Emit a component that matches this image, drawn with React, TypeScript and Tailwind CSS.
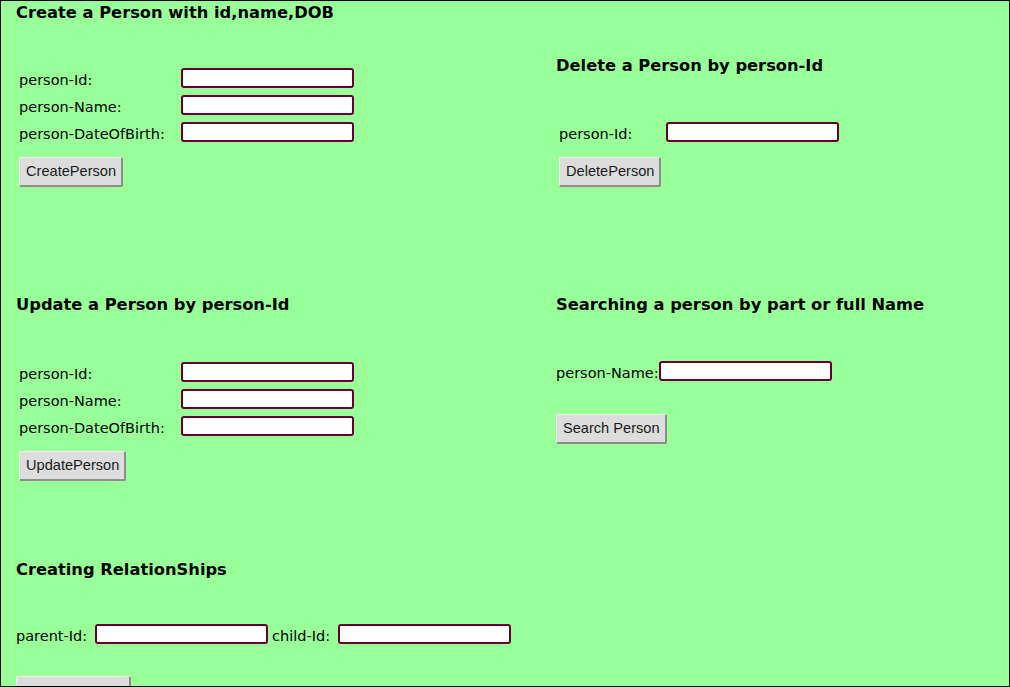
import React from "react";

const labelFont = "font-['Comic_Sans_MS','DejaVu_Sans',sans-serif] text-[14.5px] text-black pt-[6px]";
const headFont = "font-['Comic_Sans_MS','DejaVu_Sans',sans-serif] font-bold text-[16.3px] text-black leading-[22px] h-[23px] pt-[1px]";

function Input() {
  return (
    <input
      type="text"
      className="block w-[173px] h-[20px] border-2 border-[#660033] rounded-[3px] bg-white outline-none shrink-0"
    />
  );
}

const btnCls =
  "h-[30px] pl-[6px] pr-[5px] bg-[#dddddd] text-[14.6px] font-['Liberation_Sans',Arial,sans-serif] text-[#1a1a1a] border-t border-l border-t-[#ececec] border-l-[#ececec] border-r-2 border-b-2 border-r-[#8c8c8c] border-b-[#8c8c8c] rounded-[2px] leading-none";

function Btn({ children }: { children: React.ReactNode }) {
  return <button className={btnCls}>{children}</button>;
}

function Row({ label, labelW }: { label: string; labelW: string }) {
  return (
    <div className="flex items-center h-[20px]">
      <span className={`${labelFont} ${labelW} shrink-0 whitespace-nowrap`}>{label}</span>
      <Input />
    </div>
  );
}

export default function App() {
  return (
    <div className="w-[1010px] h-[687px] border border-black bg-[#99ff99] overflow-hidden">
      {/* Row 1 */}
      <div className="grid grid-cols-[540px_1fr] h-[292px]">
        <div className="flex flex-col">
          <h3 className={`${headFont} pl-[15px]`}>Create a Person with id,name,DOB</h3>
          <div className="mt-[44px] pl-[18px] flex flex-col gap-[7px]">
            <Row label="person-Id:" labelW="w-[162px]" />
            <Row label="person-Name:" labelW="w-[162px]" />
            <Row label="person-DateOfBirth:" labelW="w-[162px]" />
          </div>
          <div className="mt-[15px] pl-[18px]">
            <Btn>CreatePerson</Btn>
          </div>
        </div>
        <div className="flex flex-col">
          <h3 className={`${headFont} pl-[15px] mt-[53px]`}>Delete a Person by person-Id</h3>
          <div className="mt-[45px] pl-[18px] flex flex-col">
            <Row label="person-Id:" labelW="w-[107px]" />
          </div>
          <div className="mt-[15px] pl-[18px]">
            <Btn>DeletePerson</Btn>
          </div>
        </div>
      </div>

      {/* Row 2 */}
      <div className="grid grid-cols-[540px_1fr] h-[265px]">
        <div className="flex flex-col">
          <h3 className={`${headFont} pl-[15px]`}>Update a Person by person-Id</h3>
          <div className="mt-[46px] pl-[18px] flex flex-col gap-[7px]">
            <Row label="person-Id:" labelW="w-[162px]" />
            <Row label="person-Name:" labelW="w-[162px]" />
            <Row label="person-DateOfBirth:" labelW="w-[162px]" />
          </div>
          <div className="mt-[15px] pl-[18px]">
            <Btn>UpdatePerson</Btn>
          </div>
        </div>
        <div className="flex flex-col">
          <h3 className={`${headFont} pl-[15px]`}>Searching a person by part or full Name</h3>
          <div className="mt-[45px] pl-[15px] flex items-center h-[20px]">
            <span className={`${labelFont} w-[103px] shrink-0 whitespace-nowrap`}>person-Name:</span>
            <Input />
          </div>
          <div className="mt-[33px] pl-[15px]">
            <Btn>Search Person</Btn>
          </div>
        </div>
      </div>

      {/* Row 3 */}
      <div className="flex flex-col">
        <h3 className={`${headFont} pl-[15px]`}>Creating RelationShips</h3>
        <div className="mt-[43px] pl-[15px] flex items-center h-[20px]">
          <span className={`${labelFont} w-[79px] shrink-0 whitespace-nowrap`}>parent-Id:</span>
          <Input />
          <span className={`${labelFont} w-[70px] shrink-0 whitespace-nowrap pl-[4px]`}>child-Id:</span>
          <Input />
        </div>
        <div className="mt-[32px] pl-[15px]">
          <button className={`${btnCls} w-[115px] pt-[24px]`}>CreateRelation</button>
        </div>
      </div>
    </div>
  );
}
